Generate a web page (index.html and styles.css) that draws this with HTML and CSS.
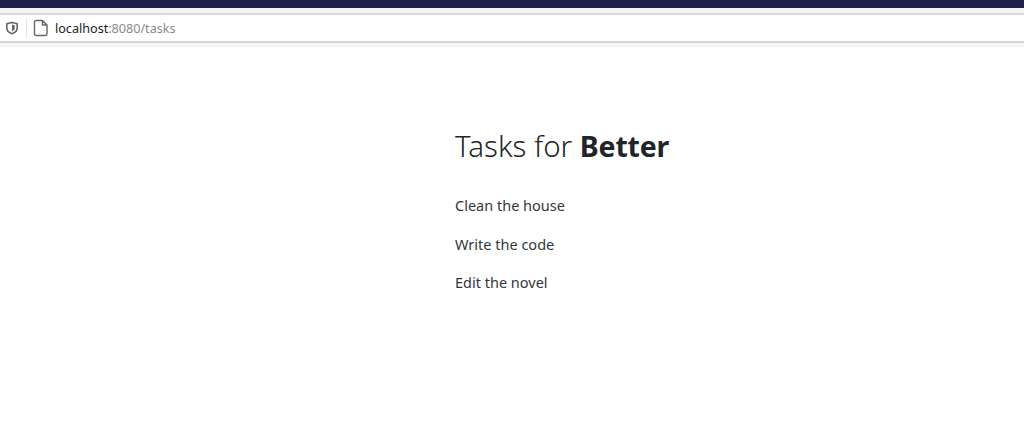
FILE: index.html
```html
<!DOCTYPE html>
<html lang="en">
<head>
  <meta charset="UTF-8" />
  <title>Tasks for Better</title>
  <link rel="stylesheet" href="styles.css">
</head>
<body>
  <div class="top-strip"></div>
  <div class="toolbar">
    <div class="address-bar">
      <svg class="shield" width="14" height="14" viewBox="0 0 14 14">
        <path d="M7 1.4 L12.2 2.8 V7 C12.2 10 9.8 11.8 7 12.8 C4.2 11.8 1.8 10 1.8 7 V2.8 Z" fill="none" stroke="#666" stroke-width="1.6"/>
        <path d="M7 3.6 L9.8 4.4 V7 C9.8 8.6 8.6 9.8 7 10.4 Z" fill="#666"/>
      </svg>
      <div class="separator"></div>
      <svg class="page-icon" width="16" height="18" viewBox="0 0 16 18">
        <path d="M3 1.5 H9.5 L14 6 V15 C14 15.9 13.4 16.5 12.5 16.5 H3 C2.1 16.5 1.5 15.9 1.5 15 V3 C1.5 2.1 2.1 1.5 3 1.5 Z M9.5 1.5 V6 H14" fill="none" stroke="#666" stroke-width="1.4" stroke-linejoin="round"/>
      </svg>
      <span class="url">localhost<span class="url-rest">:8080/tasks</span></span>
    </div>
  </div>

  <main class="content">
    <h1 class="title">Tasks for <b>Better</b></h1>
    <p class="task">Clean the house</p>
    <p class="task">Write the code</p>
    <p class="task">Edit the novel</p>
  </main>
</body>
</html>
```

FILE: styles.css
```css
* {
  box-sizing: border-box;
}

body {
  margin: 0;
  height: 432px;
  overflow: hidden;
  background-color: #fff;
  color: #212529;
  font-family: "Noto Sans", "Open Sans", sans-serif;
}

.top-strip {
  height: 8px;
  background-color: #20214a;
}

.toolbar {
  height: 39px;
  padding: 5px 0 4px;
  background-color: #f4f4f6;
  border-bottom: 1px solid #eee;
}

.address-bar {
  height: 30px;
  display: flex;
  align-items: center;
  padding-left: 5px;
  background-color: #fff;
  border-top: 2px solid #d8d8d8;
  border-bottom: 2px solid #d4d4d4;
}

.shield {
  flex-shrink: 0;
}

.separator {
  width: 1px;
  height: 20px;
  margin: 0 6px 0 7px;
  background-color: #e6e6e6;
}

.page-icon {
  flex-shrink: 0;
  margin-right: 6px;
}

.url {
  margin-top: 1px;
  font-size: 12.6px;
  color: #222;
}

.url-rest {
  color: #8a8a8a;
}

.content {
  padding: 77px 0 0 455px;
}

.title {
  margin: 0 0 26px;
  font-size: 29.5px;
  font-weight: 300;
  line-height: 43px;
}

.title b {
  font-weight: 700;
  font-size: 28.5px;
  letter-spacing: -0.2px;
}

.task {
  margin: 0 0 16px;
  font-size: 14.5px;
  line-height: 22.5px;
  color: #33373b;
}
```
